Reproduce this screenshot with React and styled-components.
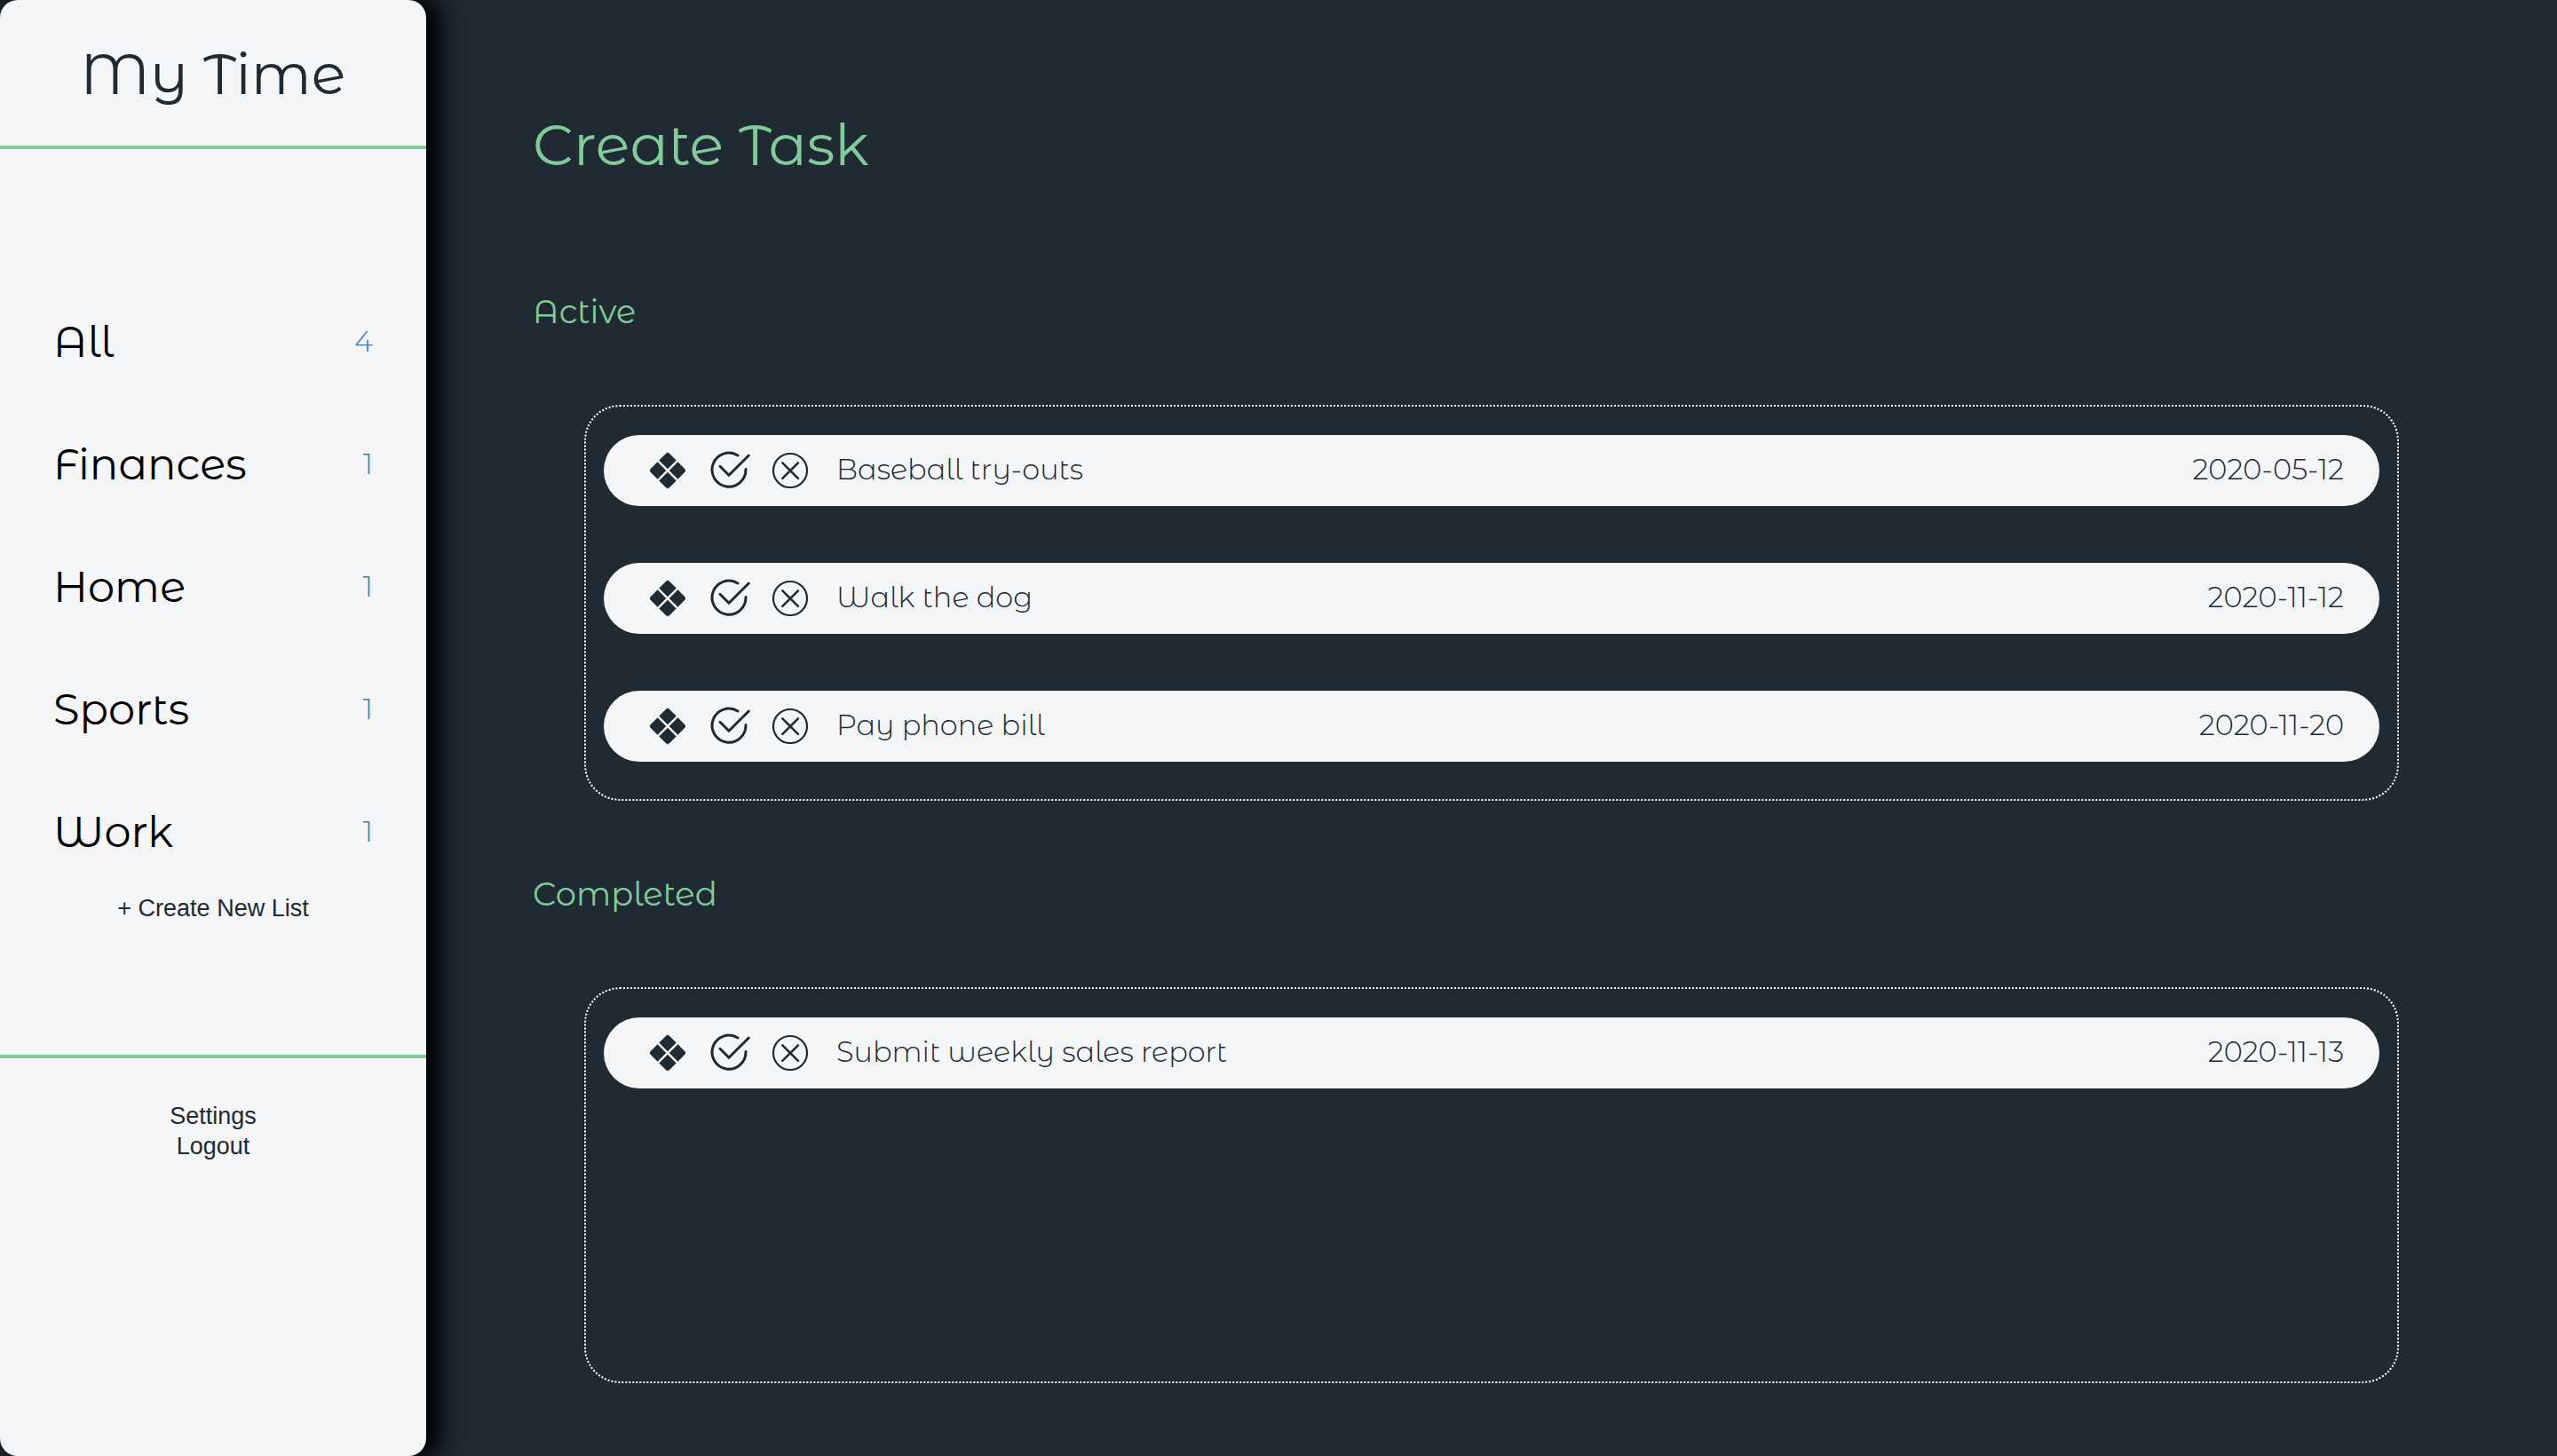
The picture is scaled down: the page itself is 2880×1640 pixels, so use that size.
import React from "react";
import styled, { createGlobalStyle } from "styled-components";

const ink = "#202a32";
const paper = "#f4f5f7";
const green = "#82c99b";
const blue = "#3c7dad";

const display = `"Montserrat Alternates", Inter, "Open Sans", sans-serif`;
const system = `Arial, "Liberation Sans", sans-serif`;

const GlobalStyle = createGlobalStyle`
  *, *::before, *::after { box-sizing: border-box; }
  body { margin: 0; background: ${ink}; font-family: ${display}; }
  h1, h2, ul { margin: 0; padding: 0; }
  ul { list-style: none; }
  button { margin: 0; padding: 0; border: 0; background: none; color: inherit; font: inherit; cursor: pointer; }
`;

const Page = styled.div`
  display: grid;
  grid-template-columns: 1fr 5fr;
  min-height: 100vh;
`;

const Sidebar = styled.aside`
  display: flex;
  flex-direction: column;
  border-radius: 20px;
  background: ${paper};
  color: ${ink};
  box-shadow: 12px 0 26px 5px #000;
`;

const Brand = styled.header`
  padding: 43px 0 41px;
  border-bottom: 4px solid ${green};
  text-align: center;
`;

const BrandName = styled.h1`
  font-size: 64px;
  font-weight: 400;
  line-height: 80px;
`;

const Lists = styled.nav`
  display: flex;
  flex-direction: column;
  align-items: center;
  padding: 148px 0 148px;
  border-bottom: 4px solid ${green};
`;

const ListItems = styled.ul`
  width: 100%;
`;

const ListButton = styled.button`
  display: flex;
  align-items: center;
  justify-content: space-between;
  width: 100%;
  padding: 40px 60px;
  color: #000;
  font-size: 48px;
  font-weight: 400;
  line-height: 58px;
`;

const Count = styled.span`
  color: ${blue};
  font-size: 32px;
  font-weight: 300;
`;

const SystemButton = styled.button`
  color: ${ink};
  font-family: ${system};
  font-size: 27px;
  line-height: 34px;
`;

const Account = styled.footer`
  display: flex;
  flex-direction: column;
  align-items: center;
  padding: 48px 0;
`;

const Main = styled.main`
  display: flex;
  flex-direction: column;
  align-items: flex-start;
  padding: 123px 178px 80px 120px;
  color: ${green};
`;

const CreateTask = styled.button`
  margin-bottom: 124px;
  font-size: 64px;
  font-weight: 400;
  line-height: 80px;
`;

const Section = styled.section`
  width: 100%;

  & + & { margin-top: 81px; }
`;

const SectionTitle = styled.h2`
  margin-bottom: 81px;
  font-size: 37px;
  font-weight: 400;
  line-height: 48px;
`;

const Tasks = styled.ul`
  display: flex;
  flex-direction: column;
  gap: 64px;
  min-height: 446px;
  margin-left: 58px;
  padding: 32px 20px 42px;
  border: 2px dotted #fff;
  border-radius: 40px;
`;

const Task = styled.li`
  display: flex;
  align-items: center;
  gap: 28px;
  height: 80px;
  padding: 0 40px 0 52px;
  border-radius: 40px;
  background: ${paper};
  color: ${ink};
  font-size: 32px;
  font-weight: 300;
  line-height: 40px;
`;

const IconButton = styled.button`
  display: flex;
  width: ${({ $wide }) => ($wide ? 42 : 40)}px;
  height: 40px;

  svg { flex: none; overflow: visible; }
`;

const TaskName = styled.span`
  flex: 1;
  margin-left: 4px;
  padding-bottom: 2px;
`;

const Due = styled.time`
  padding-bottom: 2px;
`;

const DragIcon = () => (
  <svg width="40" height="40" viewBox="0 0 40 40" aria-hidden="true">
    <g transform="rotate(45 20 20)">
      <rect x="5" y="5" width="30" height="30" rx="3" fill={ink} />
      <path d="M20 4v32M4 20h32" stroke={paper} strokeWidth="2.4" />
    </g>
  </svg>
);

const CheckIcon = () => (
  <svg width="42" height="40" viewBox="0 0 42 40" fill="none" stroke={ink} strokeWidth="3" strokeLinecap="round" strokeLinejoin="round" aria-hidden="true">
    <path d="M31 3A19 19 0 1 0 40 18.4" />
    <path d="M11 15.3l10 10L43.3 3" />
  </svg>
);

const RemoveIcon = () => (
  <svg width="40" height="40" viewBox="0 0 40 40" fill="none" stroke={ink} strokeLinecap="round" aria-hidden="true">
    <circle cx="20" cy="20" r="19" strokeWidth="2.2" />
    <path d="M11.3 11.3l17.6 17.6M28.9 11.3L11.3 28.9" strokeWidth="2.6" />
  </svg>
);

const lists = [
  ["All", 4],
  ["Finances", 1],
  ["Home", 1],
  ["Sports", 1],
  ["Work", 1],
];

const sections = [
  {
    title: "Active",
    tasks: [
      ["Baseball try-outs", "2020-05-12"],
      ["Walk the dog", "2020-11-12"],
      ["Pay phone bill", "2020-11-20"],
    ],
  },
  { title: "Completed", tasks: [["Submit weekly sales report", "2020-11-13"]] },
];

export default function App() {
  return (
    <Page>
      <GlobalStyle />
      <Sidebar>
        <Brand>
          <BrandName>My Time</BrandName>
        </Brand>
        <Lists>
          <ListItems>
            {lists.map(([name, count]) => (
              <li key={name}>
                <ListButton type="button">
                  <span>{name}</span>
                  <Count>{count}</Count>
                </ListButton>
              </li>
            ))}
          </ListItems>
          <SystemButton type="button">+ Create New List</SystemButton>
        </Lists>
        <Account>
          <SystemButton type="button">Settings</SystemButton>
          <SystemButton type="button">Logout</SystemButton>
        </Account>
      </Sidebar>
      <Main>
        <CreateTask type="button">Create Task</CreateTask>
        {sections.map(({ title, tasks }) => (
          <Section key={title}>
            <SectionTitle>{title}</SectionTitle>
            <Tasks>
              {tasks.map(([name, due]) => (
                <Task key={name}>
                  <IconButton type="button" aria-label="Move task"><DragIcon /></IconButton>
                  <IconButton type="button" aria-label="Complete task" $wide><CheckIcon /></IconButton>
                  <IconButton type="button" aria-label="Delete task"><RemoveIcon /></IconButton>
                  <TaskName>{name}</TaskName>
                  <Due dateTime={due}>{due}</Due>
                </Task>
              ))}
            </Tasks>
          </Section>
        ))}
      </Main>
    </Page>
  );
}
